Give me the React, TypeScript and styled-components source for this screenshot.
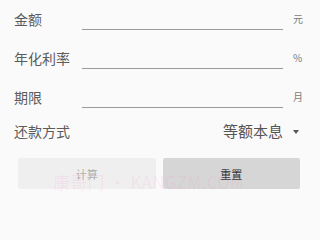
import React from "react";
import styled, { createGlobalStyle } from "styled-components";

const Global = createGlobalStyle`
  html, body { margin: 0; padding: 0; background: #fafafa; }
  body { font-family: "Noto Sans CJK SC", "Noto Sans", sans-serif; }
`;

const Page = styled.div`
  position: relative;
  width: 315px;
  height: 204px;
  overflow: hidden;
  background: #fafafa;
`;

const Form = styled.div`
  display: flex;
  flex-direction: column;
  padding-left: 14px;
`;

const Row = styled.div`
  display: grid;
  grid-template-columns: 68px 201px 1fr;
  height: 39px;
  align-items: start;
`;

const Label = styled.div`
  font-size: 14px;
  line-height: 14px;
  color: #5c5c5c;
  padding-top: 12px;
`;

const Field = styled.div`
  height: 29px;
  border-bottom: 1px solid #9a9a9a;
`;

const Unit = styled.div`
  font-size: 10px;
  line-height: 10px;
  color: #7a7a7a;
  padding-top: 14px;
  padding-left: 10px;
`;

const SelectRow = styled.div`
  display: flex;
  align-items: center;
  justify-content: space-between;
  height: 27px;
  padding-right: 16px;
`;

const SelectValue = styled.div`
  display: flex;
  align-items: center;
  gap: 10px;
  font-size: 15px;
  color: #555;
`;

const Caret = styled.span`
  width: 0;
  height: 0;
  border-left: 3.5px solid transparent;
  border-right: 3.5px solid transparent;
  border-top: 4px solid #555;
  margin-top: 2px;
`;

const Buttons = styled.div`
  display: flex;
  gap: 7px;
  padding: 0 15px 0 18px;
  margin-top: 14px;
`;

const Button = styled.div<{ $active?: boolean }>`
  flex: 1;
  height: 31px;
  display: flex;
  align-items: center;
  justify-content: center;
  font-size: 11px;
  border-radius: 2px;
  background: ${(p) => (p.$active ? "#d6d6d6" : "#efefef")};
  color: ${(p) => (p.$active ? "#333" : "#b0b0b0")};
`;

const Watermark = styled.div`
  position: absolute;
  left: 53px;
  top: 169px;
  font-size: 17px;
  letter-spacing: 0.3px;
  color: rgba(255, 120, 200, 0.12);
  white-space: nowrap;
  pointer-events: none;
  font-family: "Noto Sans CJK SC", "Noto Sans", sans-serif;
`;

const fields = [
  { label: "金额", unit: "元" },
  { label: "年化利率", unit: "%" },
  { label: "期限", unit: "月" },
];

export default function App() {
  return (
    <Page>
      <Global />
      <Form>
        {fields.map((f) => (
          <Row key={f.label}>
            <Label>{f.label}</Label>
            <Field />
            <Unit>{f.unit}</Unit>
          </Row>
        ))}
        <SelectRow>
          <Label style={{ paddingTop: 0 }}>还款方式</Label>
          <SelectValue>
            等额本息
            <Caret />
          </SelectValue>
        </SelectRow>
      </Form>
      <Buttons>
        <Button>计算</Button>
        <Button $active>重置</Button>
      </Buttons>
      <Watermark>康哥门 · KANGZM.COM</Watermark>
    </Page>
  );
}
